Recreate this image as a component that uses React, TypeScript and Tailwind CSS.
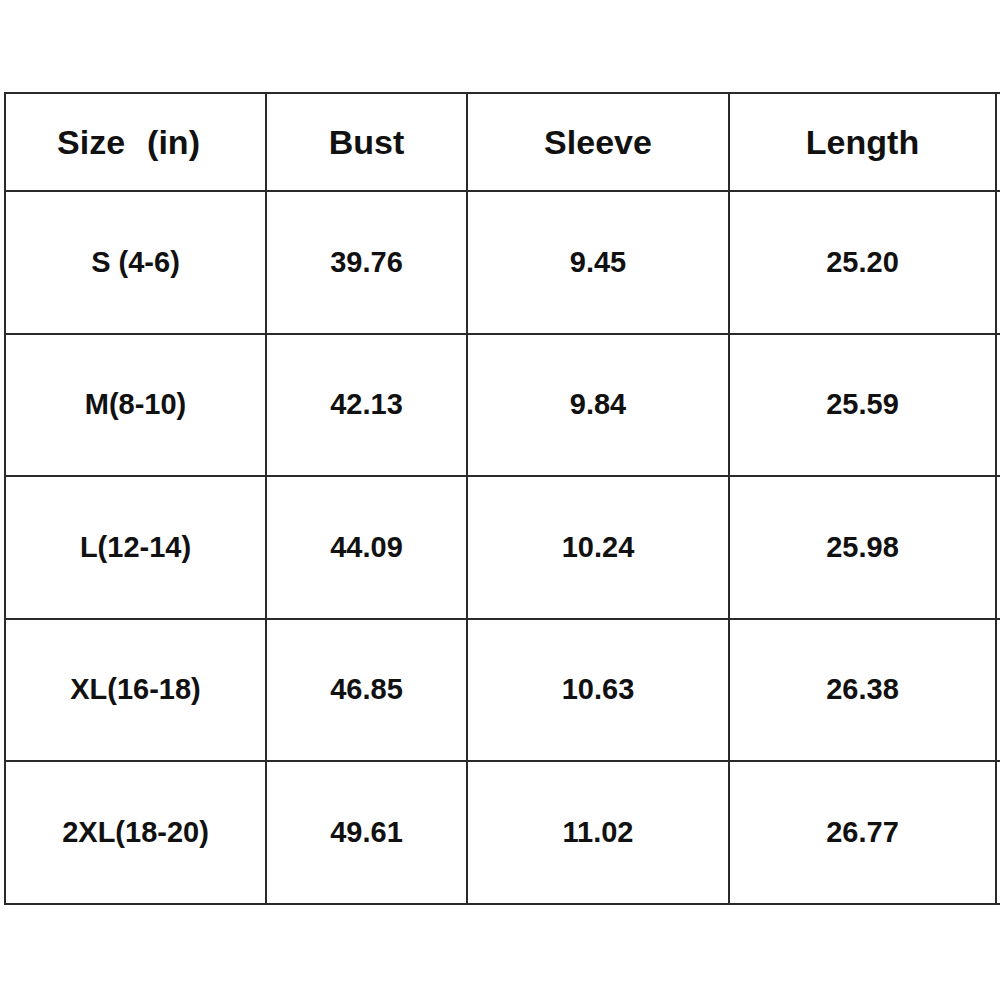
import type { ReactNode } from "react";

const columns: { label: ReactNode; width: string }[] = [
  {
    label: (
      <span className="mr-[14px]">
        <span>Size</span>
        <span className="ml-[22px]">(in)</span>
      </span>
    ),
    width: "w-[261px]",
  },
  { label: "Bust", width: "w-[201px]" },
  { label: "Sleeve", width: "w-[262px]" },
  { label: "Length", width: "w-[267px]" },
  { label: "", width: "w-[200px]" },
];

const rows = [
  ["S (4-6)", "39.76", "9.45", "25.20", ""],
  ["M(8-10)", "42.13", "9.84", "25.59", ""],
  ["L(12-14)", "44.09", "10.24", "25.98", ""],
  ["XL(16-18)", "46.85", "10.63", "26.38", ""],
  ["2XL(18-20)", "49.61", "11.02", "26.77", ""],
];

export default function App() {
  return (
    <div
      className="w-[1000px] h-[1000px] overflow-hidden bg-white pt-[92px] pl-[4px] text-[#111]"
      style={{ fontFamily: '"Liberation Sans", Arial, sans-serif' }}
    >
      <div className="flex w-max flex-col border-t-2 border-l-2 border-[#2a2a2a]">
        {/* header */}
        <div className="flex">
          {columns.map((c, i) => (
            <div
              key={i}
              className={`${c.width} h-[98px] shrink-0 border-r-2 border-b-2 border-[#2a2a2a] flex items-center justify-center text-[34px] font-bold`}
            >
              {c.label}
            </div>
          ))}
        </div>
        {rows.map((r, ri) => (
          <div key={ri} className="flex">
            {r.map((v, ci) => (
              <div
                key={ci}
                className={`${columns[ci].width} h-[142.6px] shrink-0 border-r-2 border-b-2 border-[#2a2a2a] flex items-center justify-center text-[29px] font-bold`}
              >
                {v}
              </div>
            ))}
          </div>
        ))}
      </div>
    </div>
  );
}
